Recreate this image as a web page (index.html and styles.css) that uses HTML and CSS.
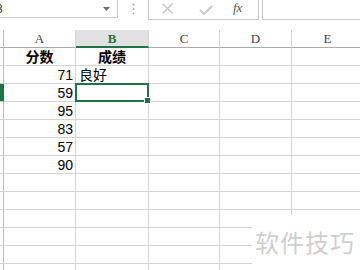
FILE: index.html
```html
<!DOCTYPE html>
<html lang="zh">
<head>
<meta charset="utf-8">
<link rel="stylesheet" href="styles.css">
</head>
<body>
<div class="app">
  <div class="topbar">
    <div class="namebox"><span class="name">B3</span><svg class="dd" width="7" height="4" viewBox="0 0 7 4"><path d="M0 0H7L3.5 4Z" fill="#6d6d6d"/></svg></div>
    <div class="grip"><svg width="3" height="12" viewBox="0 0 3 12"><circle cx="1.5" cy="1.5" r="1" fill="#a8a8a8"/><circle cx="1.5" cy="6" r="1" fill="#a8a8a8"/><circle cx="1.5" cy="10.5" r="1" fill="#a8a8a8"/></svg></div>
    <div class="buttons">
      <svg class="btn-x" width="11" height="11" viewBox="0 0 11 11"><path d="M0.5 0.5L10.5 10.5M10.5 0.5L0.5 10.5" stroke="#c4c4c4" stroke-width="1.3"/></svg>
      <svg class="btn-ok" width="14" height="10" viewBox="0 0 14 10"><path d="M1 5L5 9L13 1" stroke="#cbcbcb" stroke-width="2" fill="none"/></svg>
      <span class="fx">fx</span>
    </div>
    <div class="formula"></div>
  </div>
  <div class="gap"></div>
  <div class="sheet">
    <div class="rh corner"></div>
    <div class="ch">A</div><div class="ch sel">B</div><div class="ch">C</div><div class="ch">D</div><div class="ch">E</div>

    <div class="rh"></div>
    <div class="c ctr b">分数</div><div class="c ctr b">成绩</div><div class="c"></div><div class="c"></div><div class="c"></div>

    <div class="rh"></div>
    <div class="c num">71</div><div class="c txt">良好</div><div class="c"></div><div class="c"></div><div class="c"></div>

    <div class="rh rsel"></div>
    <div class="c num">59</div><div class="c active"><span class="selbox"><span class="handle"></span></span></div><div class="c"></div><div class="c"></div><div class="c"></div>

    <div class="rh"></div>
    <div class="c num">95</div><div class="c"></div><div class="c"></div><div class="c"></div><div class="c"></div>

    <div class="rh"></div>
    <div class="c num">83</div><div class="c"></div><div class="c"></div><div class="c"></div><div class="c"></div>

    <div class="rh"></div>
    <div class="c num">57</div><div class="c"></div><div class="c"></div><div class="c"></div><div class="c"></div>

    <div class="rh"></div>
    <div class="c num">90</div><div class="c"></div><div class="c"></div><div class="c"></div><div class="c"></div>

    <div class="rh"></div>
    <div class="c"></div><div class="c"></div><div class="c"></div><div class="c"></div><div class="c"></div>
    <div class="rh"></div>
    <div class="c"></div><div class="c"></div><div class="c"></div><div class="c"></div><div class="c"></div>
    <div class="rh"></div>
    <div class="c"></div><div class="c"></div><div class="c"></div><div class="c"></div><div class="c"></div>
    <div class="rh"></div>
    <div class="c"></div><div class="c"></div><div class="c"></div><div class="c"></div><div class="c"></div>
    <div class="rh"></div>
    <div class="c"></div><div class="c"></div><div class="c"></div><div class="c"></div><div class="c"></div>
    <div class="rh"></div>
    <div class="c"></div><div class="c"></div><div class="c"></div><div class="c"></div><div class="c"></div>
  </div>
  <div class="watermark">软件技巧</div>
</div>
</body>
</html>
```

FILE: styles.css
```css
html, body {
  margin: 0;
  padding: 0;
  background: #fff;
}
.app {
  position: relative;
  width: 360px;
  height: 270px;
  overflow: hidden;
  font-family: "Liberation Sans", "Noto Sans CJK SC", sans-serif;
}
.topbar {
  display: flex;
  height: 20px;
}
.namebox {
  width: 118px;
  height: 18px;
  box-sizing: border-box;
  border-right: 1px solid #c6c6c6;
  border-bottom: 1px solid #c6c6c6;
  display: flex;
  align-items: center;
  justify-content: space-between;
  padding-right: 7px;
  overflow: hidden;
}
.name {
  margin-left: -12px;
  font-size: 12px;
  color: #333;
  font-family: "Liberation Sans", sans-serif;
}
.dd {
  display: block;
}
.grip {
  width: 30px;
  display: flex;
  justify-content: center;
  align-items: flex-start;
  padding-top: 3px;
  box-sizing: border-box;
}
.buttons {
  width: 111px;
  height: 20px;
  box-sizing: border-box;
  border-left: 1px solid #c6c6c6;
  border-right: 1px solid #c6c6c6;
  border-bottom: 1px solid #c6c6c6;
  display: flex;
  align-items: center;
  padding-left: 13px;
}
.btn-x {
  display: block;
  margin-top: -2px;
}
.btn-ok {
  display: block;
  margin-left: 26px;
  margin-top: 1px;
}
.fx {
  margin-left: 20px;
  font-family: "Liberation Serif", serif;
  font-style: italic;
  font-size: 13px;
  color: #555;
  margin-top: -3px;
}
.formula {
  flex: 1;
  margin-left: 3px;
  height: 20px;
  box-sizing: border-box;
  border-left: 1px solid #c6c6c6;
  border-bottom: 1px solid #c6c6c6;
}
.gap {
  height: 10px;
}
.sheet {
  display: grid;
  grid-template-columns: 4px 72px 73px 71px 72px 72px;
  grid-auto-rows: 18px;
}
.sheet > div {
  box-sizing: border-box;
}
.rh {
  border-right: 1px solid #bcbcbc;
  border-bottom: 1px solid #d0d0d0;
}
.rh.corner {
  border-bottom: 1px solid #ababab;
}
.rh.rsel {
  background: #217346;
  border-right-color: #217346;
}
.ch {
  border-right: 1px solid #d8d8d8;
  border-bottom: 1px solid #ababab;
  text-align: center;
  font-family: "Liberation Serif", serif;
  font-size: 13px;
  line-height: 17px;
  color: #444;
}
.ch.sel {
  background: #e1e1e1;
  border-bottom: 2px solid #217346;
  color: #217346;
  font-weight: bold;
}
.c {
  border-right: 1px solid #d4d4d4;
  border-bottom: 1px solid #d4d4d4;
  font-size: 14px;
  line-height: 15px;
  padding-top: 2px;
  color: #000;
  white-space: nowrap;
  overflow: visible;
}
.c.ctr {
  text-align: center;
}
.c.b {
  font-weight: bold;
}
.c.num {
  text-align: right;
  padding-right: 2px;
}
.c.txt {
  padding-left: 3px;
}
.c.active {
  position: relative;
}
.selbox {
  position: absolute;
  left: -1px;
  top: -1px;
  right: -1px;
  bottom: -1px;
  border: 2px solid #217346;
  box-sizing: border-box;
}
.handle {
  position: absolute;
  right: -4px;
  bottom: -4px;
  width: 5px;
  height: 5px;
  background: #217346;
  border: 1px solid #fff;
  box-sizing: content-box;
}
.watermark {
  position: absolute;
  left: 252px;
  top: 215px;
  right: 0;
  bottom: 0;
  background: #fff;
  padding-left: 3px;
  padding-top: 13px;
  font-family: "Noto Sans CJK SC", sans-serif;
  font-size: 24px;
  line-height: 28px;
  color: #cfcfcf;
  white-space: nowrap;
  letter-spacing: 1px;
}
```
